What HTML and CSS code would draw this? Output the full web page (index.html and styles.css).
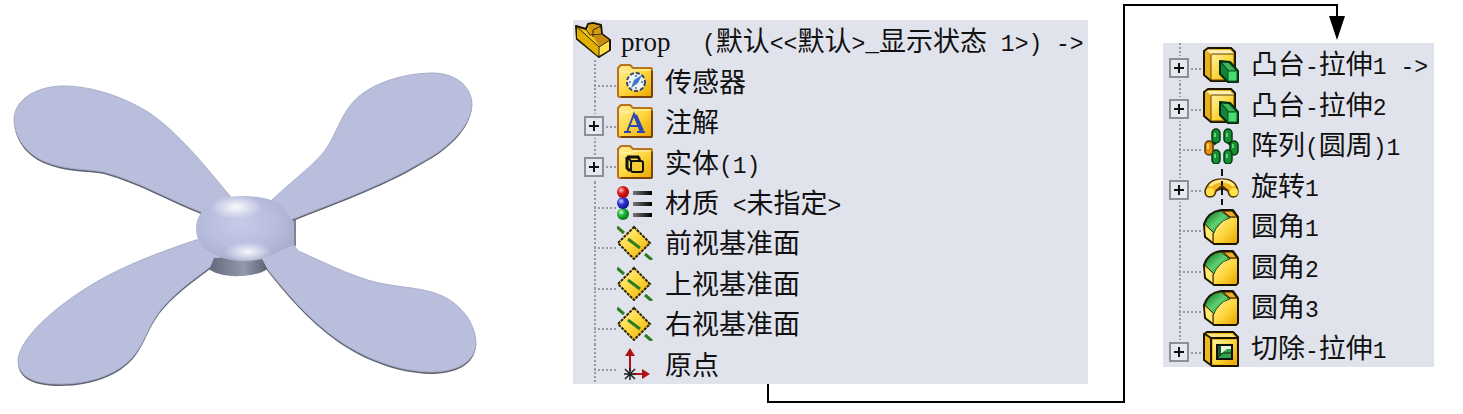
FILE: index.html
```html
<!DOCTYPE html>
<html lang="zh-CN">
<head>
    <meta charset="UTF-8">
    <meta name="viewport" content="width=device-width, initial-scale=1.0">
    <title>prop</title>
    <link rel="stylesheet" href="styles.css">
</head>
<body>

<svg class="defs" width="0" height="0" aria-hidden="true">
    <defs>
        <linearGradient id="gold" x1="0" y1="0" x2="1" y2="1">
            <stop offset="0" stop-color="#fff0a0"/>
            <stop offset="0.5" stop-color="#ffd840"/>
            <stop offset="1" stop-color="#e8a400"/>
        </linearGradient>
        <linearGradient id="bar" x1="0" x2="1">
            <stop offset="0" stop-color="#777"/>
            <stop offset="1" stop-color="#000"/>
        </linearGradient>
        <linearGradient id="green" x1="0" y1="0" x2="1" y2="1">
            <stop offset="0" stop-color="#0b6a20"/>
            <stop offset="0.5" stop-color="#5fd070"/>
            <stop offset="1" stop-color="#0b6a20"/>
        </linearGradient>
        <radialGradient id="red-ball" cx="0.35" cy="0.35" r="0.7">
            <stop offset="0" stop-color="#ffd0d0"/><stop offset="0.4" stop-color="#e02020"/><stop offset="1" stop-color="#900"/>
        </radialGradient>
        <radialGradient id="blue-ball" cx="0.35" cy="0.35" r="0.7">
            <stop offset="0" stop-color="#d8d8ff"/><stop offset="0.4" stop-color="#3434d8"/><stop offset="1" stop-color="#101080"/>
        </radialGradient>
        <radialGradient id="green-ball" cx="0.35" cy="0.35" r="0.7">
            <stop offset="0" stop-color="#e0ffe0"/><stop offset="0.4" stop-color="#22b83a"/><stop offset="1" stop-color="#05701a"/>
        </radialGradient>
    </defs>

    <symbol id="part" viewBox="0 0 36 36">
        <path d="M1 4 L11 7 L13 2 L18 1 L26 3 L27 12 L35 18 V28 L24 35 L2 17 Z" fill="#f2c21c" stroke="#1c1600" stroke-width="2" stroke-linejoin="round"/>
        <path d="M2 5 L23 25 V34 L2 16 Z" fill="#e2b000"/>
        <path d="M24 25 L34 19 V28 L24 34 Z" fill="#ffe04c"/>
        <path d="M13 3 L18 2 L25 4 V11 L15 12 Z" fill="#d59a12"/>
        <path d="M18 14 L26 12 L34 18 L24 24 Z" fill="#c98a14"/>
        <path d="M1 4 L24 25 L35 18 M24 25 V35 M11 7 L15 13 L26 12 M18 15 L18 8 L26 4" fill="none" stroke="#2c2200" stroke-width="1"/>
    </symbol>

    <symbol id="folder" viewBox="0 0 36 36">
        <path d="M1 32 V5 L4 2 H13 L16 5 H34 Q35 5 35 7 V33 Q35 34 33 34 H3 Q1 34 1 32 Z" fill="url(#gold)" stroke="#b9741a" stroke-width="2"/>
        <path d="M3 9 H14 L17 7 H33" fill="none" stroke="#fff6c0" stroke-width="1"/>
        <path d="M35 8 V33 Q35 34 33 34 H4" fill="none" stroke="#7a4508" stroke-width="2"/>
    </symbol>

    <symbol id="sensor" viewBox="0 0 36 36">
        <use href="#folder"/>
        <circle cx="19" cy="19" r="9" fill="#edf3fb" stroke="#31496e" stroke-width="2" stroke-dasharray="4 2"/>
        <path d="M14 25 L17 17 L25 12 L21 20 Z" fill="#3f75c8"/>
        <path d="M19 12 V14 M12 19 H14 M24 19 H26 M19 24 V26" stroke="#222" stroke-width="1"/>
    </symbol>

    <symbol id="annotation" viewBox="0 0 36 36">
        <use href="#folder"/>
        <path d="M7 29 H14 M20 29 H28 M10 29 L17 11 L24 29 M13 23 H22" fill="none" stroke="#2b45b4" stroke-width="2"/>
        <path d="M18 12 L25 28" stroke="#2b45b4" stroke-width="4"/>
    </symbol>

    <symbol id="solid" viewBox="0 0 36 36">
        <use href="#folder"/>
        <path d="M10 13 H21 L23 16 M10 13 V24 L13 27" fill="none" stroke="#111" stroke-width="3"/>
        <rect x="14" y="17" width="12" height="11" rx="2" fill="#f7cf35" stroke="#111" stroke-width="2"/>
        <path d="M10 13 L15 18" stroke="#111" stroke-width="2"/>
    </symbol>

    <symbol id="material" viewBox="0 0 36 36">
        <circle cx="6" cy="30" r="6" fill="url(#green-ball)"/>
        <circle cx="6" cy="19" r="6" fill="url(#blue-ball)"/>
        <circle cx="6" cy="8" r="6" fill="url(#red-ball)"/>
        <path d="M16 7 H35 V11 H16 Z M16 18 H35 V22 H16 Z M16 29 H35 V33 H16 Z" fill="url(#bar)"/>
    </symbol>

    <symbol id="plane" viewBox="0 0 36 36">
        <path d="M17 3 L33 19 L17 35 L1 19 Z" fill="url(#gold)"/>
        <path d="M17 3 L33 19 L17 35 L1 19 Z" fill="none" stroke="#2e2500" stroke-width="2" stroke-dasharray="3 1"/>
        <path d="M0 3 L7 9 M11 15 L23 24 M28 30 L35 36" stroke="#2f7d22" stroke-width="3"/>
    </symbol>

    <symbol id="origin" viewBox="0 0 36 36">
        <path d="M13 25 V9 M16 28 H26" stroke="#b01218" stroke-width="2"/>
        <path d="M13 2 L18 10 H8 Z M33 28 L25 33 V23 Z" fill="#b01218"/>
        <path d="M13 22 V34 M7 28 H19 M8 23 L18 33 M18 23 L8 33" stroke="#222" stroke-width="1.5"/>
    </symbol>

    <symbol id="block" viewBox="0 0 36 36">
        <path d="M1 3 L4 1 H30 L35 6 V35 H9 L1 29 Z" fill="#f0b81e" stroke="#1a1400" stroke-width="2" stroke-linejoin="round"/>
        <path d="M3 3 H29 L33 7 H8 Z" fill="#ffe27a"/>
        <path d="M8 34 V7 H34 M8 7 L2 3" fill="none" stroke="#1a1400" stroke-width="2"/>
        <rect x="10" y="9" width="23" height="24" fill="url(#gold)"/>
    </symbol>

    <symbol id="boss" viewBox="0 0 36 36">
        <path d="M1 4 L5 1 H28 L32 5 V32 L30 34 H8 L1 28 Z" fill="#e9b020" stroke="#1a1400" stroke-width="2" stroke-linejoin="round"/>
        <path d="M3 3 H27 L31 7 H8 Z" fill="#fff0b0"/>
        <rect x="8" y="7" width="23" height="26" rx="1" fill="url(#gold)" stroke="#5e4300" stroke-width="1"/>
        <path d="M17 14 L27 15 L35 24 V35 H25 L17 27 Z" fill="#178236" stroke="#062c10" stroke-width="2" stroke-linejoin="round"/>
        <path d="M19 16 H25 L32 23 H25 Z" fill="#3dba58"/>
        <rect x="25" y="24" width="9" height="10" fill="#49dc72" stroke="#0b5a22" stroke-width="1"/>
        <path d="M17 14 L25 23" stroke="#062c10" stroke-width="1"/>
    </symbol>

    <symbol id="cut" viewBox="0 0 36 36">
        <use href="#block"/>
        <rect x="14" y="14" width="15" height="14" fill="#12601f" stroke="#111" stroke-width="2"/>
        <path d="M18 15 H28 V22 H18 Z" fill="#e9f3dc"/>
        <path d="M20 21 L24 18 H28 V27 H15 L19 22 Z" fill="#34a04a"/>
        <path d="M15 26 L20 22 H28" fill="none" stroke="#0c2e10" stroke-width="1"/>
    </symbol>

    <symbol id="pattern" viewBox="0 0 36 36">
        <path d="M9 13 L13 16 M29 13 L25 16 M9 26 L13 23 M29 26 L25 23" stroke="#06380f" stroke-width="4"/>
        <g fill="#129033" stroke="#06380f" stroke-width="1.5">
            <rect x="9" y="1" width="8" height="14" rx="4"/>
            <rect x="21" y="1" width="8" height="14" rx="4"/>
            <rect x="27" y="13" width="8" height="14" rx="4"/>
            <rect x="9" y="22" width="8" height="14" rx="4"/>
            <rect x="21" y="22" width="8" height="14" rx="4"/>
            <rect x="2" y="13" width="8" height="14" rx="4" fill="#e8920c" stroke="#5b3200"/>
        </g>
        <path d="M12 5 V9 M24 5 V9 M30 16 V20 M12 26 V30 M24 26 V30" stroke="#5fd873" stroke-width="2"/>
        <path d="M5 16 V21" stroke="#ffd070" stroke-width="2"/>
    </symbol>

    <symbol id="revolve" viewBox="0 0 36 36">
        <path d="M2 22 Q5 10 19 10 Q33 10 35 22 Q35 28 30 28 Q26 28 25 22 Q19 18 13 22 Q12 28 7 28 Q2 28 2 22 Z" fill="#f2b41c" stroke="#4a3000" stroke-width="1.5"/>
        <path d="M7 17 Q12 12 19 12 Q26 12 31 17" fill="none" stroke="#ffe98c" stroke-width="3"/>
        <circle cx="7" cy="23" r="4" fill="#ffe34c"/>
        <circle cx="31" cy="23" r="4" fill="#ffe34c"/>
        <path d="M19 0 V7 M19 12 V26 M19 30 V36" stroke="#111" stroke-width="2"/>
        <path d="M13 22 L19 17 L25 22" fill="none" stroke="#4a3000" stroke-width="2"/>
    </symbol>

    <symbol id="fillet" viewBox="0 0 36 36">
        <path d="M1 15 Q5 3 18 1 H30 L35 8 V33 L33 35 H11 L2 28 Z" fill="#e7a91c" stroke="#1a1400" stroke-width="2" stroke-linejoin="round"/>
        <path d="M2 15 Q6 3 18 2 L27 9 Q15 13 11 24 Z" fill="url(#green)" stroke="#123a14" stroke-width="1"/>
        <path d="M11 25 Q15 13 28 9 L34 9 V33 L32 34 H11 Z" fill="url(#gold)"/>
        <path d="M2 17 L10 24 V33 L3 27 Z" fill="#ffe878"/>
        <path d="M20 2 H29 L34 8 H27 Z" fill="#f2ae2a" stroke="#1a1400" stroke-width="1"/>
        <path d="M10 24 V34" stroke="#1a1400" stroke-width="1"/>
    </symbol>
</svg>

<main class="sheet">
    <svg class="model" viewBox="0 60 490 340" role="img" aria-label="prop">
        <defs>
            <radialGradient id="hub" cx="0.45" cy="0.42" r="0.6">
                <stop offset="0" stop-color="#c6cae8"/>
                <stop offset="0.6" stop-color="#b9bedf"/>
                <stop offset="1" stop-color="#a9aecd"/>
            </radialGradient>
            <radialGradient id="glow">
                <stop offset="0" stop-color="#fff" stop-opacity="0.9"/>
                <stop offset="1" stop-color="#fff" stop-opacity="0"/>
            </radialGradient>
            <linearGradient id="base" x1="0" x2="1">
                <stop offset="0" stop-color="#656a7c"/>
                <stop offset="0.6" stop-color="#9599ae"/>
                <stop offset="1" stop-color="#5d6172"/>
            </linearGradient>
            <g id="blades">
                <path d="M230 196 C205 166 178 132 148 112 C118 94 88 86 62 86 C32 87 14 102 14 120 C15 141 30 156 46 162 C64 170 88 169 104 172 C140 182 168 199 201 212 L240 230 Z"/>
                <path d="M273 199 C300 174 318 162 328 146 C339 127 342 114 354 101 C370 84 402 73 434 73 C458 74 472 88 472 105 C470 127 449 148 420 163 C382 186 330 204 293 219 L250 230 Z"/>
                <path d="M196 240 C160 252 126 265 98 281 C60 303 20 336 18 360 C18 378 36 384 60 384 C94 384 124 372 138 350 C148 334 150 322 164 306 C180 288 200 275 214 264 L240 235 Z"/>
                <path d="M294 249 C330 265 360 281 390 285 C415 289 435 289 454 303 C468 314 476 329 476 344 C474 363 456 372 430 372 C398 371 366 359 338 340 C308 319 284 290 266 267 L250 235 Z"/>
            </g>
        </defs>
        <path d="M286 213 H296 V246 L286 252 Z" fill="#7e8396"/>
        <path d="M208 254 V268 C218 279 256 279 270 267 V254 Z" fill="url(#base)"/>
        <use href="#blades" fill="#5f6372" y="2"/>
        <use href="#blades" fill="#b9bedc" stroke="#a9aec9" stroke-width="1"/>
        <path d="M214 258 L210 268 C222 278 256 278 267 269 L262 258 Z" fill="url(#base)"/>
        <path d="M196 229 C196 209 215 196 243 196 C262 196 276 200 284 208 L294 222 V245 L278 252 C268 259 256 261 241 261 C215 260 196 247 196 229 Z" fill="url(#hub)"/>
        <path d="M262 259 C272 255 280 250 294 245 L300 252 L270 272 Z" fill="#b9bedc"/>
        <ellipse cx="236" cy="207" rx="26" ry="12" fill="url(#glow)"/>
        <ellipse cx="248" cy="252" rx="24" ry="10" fill="url(#glow)"/>
    </svg>

    <ul class="tree tree-main">
        <li class="row root">
            <svg class="icon"><use href="#part"/></svg>
            <span class="label"><span class="part-name">prop</span><span class="code">(</span>默认<span class="code">&lt;&lt;</span>默认<span class="code">&gt;_</span>显示状态<span class="code"> 1&gt;) -&gt;</span></span>
        </li>
        <li class="row">
            <span class="branch"></span>
            <svg class="icon"><use href="#sensor"/></svg>
            <span class="label">传感器</span>
        </li>
        <li class="row">
            <span class="branch"><button class="toggle" aria-label="展开 注解"></button></span>
            <svg class="icon"><use href="#annotation"/></svg>
            <span class="label">注解</span>
        </li>
        <li class="row">
            <span class="branch"><button class="toggle" aria-label="展开 实体"></button></span>
            <svg class="icon"><use href="#solid"/></svg>
            <span class="label">实体<span class="code">(1)</span></span>
        </li>
        <li class="row">
            <span class="branch"></span>
            <svg class="icon"><use href="#material"/></svg>
            <span class="label">材质<span class="code"> &lt;</span>未指定<span class="code">&gt;</span></span>
        </li>
        <li class="row">
            <span class="branch"></span>
            <svg class="icon"><use href="#plane"/></svg>
            <span class="label">前视基准面</span>
        </li>
        <li class="row">
            <span class="branch"></span>
            <svg class="icon"><use href="#plane"/></svg>
            <span class="label">上视基准面</span>
        </li>
        <li class="row">
            <span class="branch"></span>
            <svg class="icon"><use href="#plane"/></svg>
            <span class="label">右视基准面</span>
        </li>
        <li class="row">
            <span class="branch"></span>
            <svg class="icon"><use href="#origin"/></svg>
            <span class="label">原点</span>
        </li>
    </ul>

    <ul class="tree tree-features">
        <li class="row">
            <span class="branch"><button class="toggle" aria-label="展开 凸台-拉伸1"></button></span>
            <svg class="icon"><use href="#boss"/></svg>
            <span class="label">凸台<span class="code">-</span>拉伸<span class="code">1 -&gt;</span></span>
        </li>
        <li class="row">
            <span class="branch"><button class="toggle" aria-label="展开 凸台-拉伸2"></button></span>
            <svg class="icon"><use href="#boss"/></svg>
            <span class="label">凸台<span class="code">-</span>拉伸<span class="code">2</span></span>
        </li>
        <li class="row">
            <span class="branch"></span>
            <svg class="icon"><use href="#pattern"/></svg>
            <span class="label">阵列<span class="code">(</span>圆周<span class="code">)1</span></span>
        </li>
        <li class="row">
            <span class="branch"><button class="toggle" aria-label="展开 旋转1"></button></span>
            <svg class="icon"><use href="#revolve"/></svg>
            <span class="label">旋转<span class="code">1</span></span>
        </li>
        <li class="row">
            <span class="branch"></span>
            <svg class="icon"><use href="#fillet"/></svg>
            <span class="label">圆角<span class="code">1</span></span>
        </li>
        <li class="row">
            <span class="branch"></span>
            <svg class="icon"><use href="#fillet"/></svg>
            <span class="label">圆角<span class="code">2</span></span>
        </li>
        <li class="row">
            <span class="branch"></span>
            <svg class="icon"><use href="#fillet"/></svg>
            <span class="label">圆角<span class="code">3</span></span>
        </li>
        <li class="row">
            <span class="branch"><button class="toggle" aria-label="展开 切除-拉伸1"></button></span>
            <svg class="icon"><use href="#cut"/></svg>
            <span class="label">切除<span class="code">-</span>拉伸<span class="code">1</span></span>
        </li>
    </ul>

    <!-- arrow from the first tree to the second -->
    <svg class="connector" viewBox="0 0 1463 414" aria-hidden="true">
        <path d="M768 384 V402 H1124 V5 H1337 V18" fill="none" stroke="#000" stroke-width="2"/>
        <path d="M1329 16 H1345 L1337 40 Z"/>
    </svg>
</main>

</body>
</html>
```
FILE: styles.css
```css
* {
    box-sizing: border-box;
}
body {
    margin: 0;
    background: #fff;
    color: #111;
    font-family: 'Noto Sans CJK SC', sans-serif;
}
.defs {
    position: absolute;
}
.sheet {
    position: relative;
    display: grid;
    grid-template-columns:
        minmax(0, 490fr) 83fr minmax(0, 515fr) 75fr minmax(0, 271fr) 29fr;
    align-items: start;
    padding: 20px 0 14px;
}
.model {
    grid-column: 1;
    width: 100%;
    margin-top: 40px;
}
.tree {
    display: grid;
    grid-auto-rows: 1fr;
    margin: 0;
    padding: 0;
    list-style: none;
    background: #e1e3ec;
}
.tree-main {
    --line: 21px;
    --branch: 44px;
    grid-column: 3;
    min-height: 364px;
}
.tree-features {
    --line: 16px;
    --branch: 40px;
    grid-column: 5;
    min-height: 324px;
    margin-top: 23px;
}
.row {
    display: flex;
    align-items: center;
}
.root {
    padding-left: 2px;
}
/* dotted tree lines: one down, one across to the icon */
.branch {
    flex: none;
    align-self: stretch;
    display: flex;
    align-items: center;
    width: var(--branch);
    padding: 10px 0 0 calc(var(--line) - 10px);
    background:
        repeating-linear-gradient(#989aa3 0 2px, transparent 2px 4px) var(--line) 0 / 2px 100% no-repeat,
        repeating-linear-gradient(90deg, #989aa3 0 2px, transparent 2px 4px) var(--line) 25px / 100% 2px no-repeat;
}
.tree-features .row:last-child .branch {
    background-size: 2px 60%, 100% 2px;
}
.toggle {
    width: 20px;
    height: 20px;
    padding: 0;
    border: 2px solid #8d8f96;
    background:
        linear-gradient(#111, #111) center / 10px 2px no-repeat,
        linear-gradient(#111, #111) center / 2px 10px no-repeat,
        #e6e8f0;
    outline: 2px solid #e1e3ec;
    cursor: pointer;
}
.icon {
    flex: none;
    width: 36px;
    height: 36px;
}
.tree-features .icon {
    margin-top: 4px;
}
.label {
    padding-left: 12px;
    font-size: 27px;
    line-height: 32px;
    white-space: pre;
}
.root .label {
    padding-left: 10px;
}
.code {
    font-family: 'Liberation Mono', monospace;
    font-size: 23px;
    line-height: 0;
}
.part-name {
    display: inline-block;
    width: 81px;
    font-family: 'Liberation Serif', serif;
    line-height: 24px;
}
.connector {
    position: absolute;
    top: 0;
    left: 0;
    width: 100%;
    pointer-events: none;
}
```
